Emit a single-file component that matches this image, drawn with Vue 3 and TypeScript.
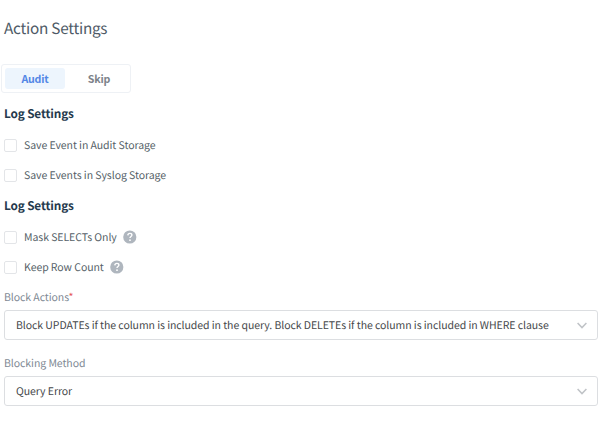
<script setup lang="ts">
import { reactive, ref } from 'vue'

interface CheckItem {
  id: string
  label: string
  help: boolean
}

interface SelectField {
  id: string
  label: string
  required: boolean
  value: string
}

const tabs: string[] = ['Audit', 'Skip']
const activeTab = ref<string>('Audit')

const groups: { id: string; title: string; items: CheckItem[] }[] = [
  {
    id: 'storage',
    title: 'Log Settings',
    items: [
      { id: 'audit', label: 'Save Event in Audit Storage', help: false },
      { id: 'syslog', label: 'Save Events in Syslog Storage', help: false },
    ],
  },
  {
    id: 'rows',
    title: 'Log Settings',
    items: [
      { id: 'mask', label: 'Mask SELECTs Only', help: true },
      { id: 'count', label: 'Keep Row Count', help: true },
    ],
  },
]

const checked = reactive<Record<string, boolean>>({})

const fields: SelectField[] = [
  {
    id: 'actions',
    label: 'Block Actions',
    required: true,
    value: 'Block UPDATEs if the column is included in the query. Block DELETEs if the column is included in WHERE clause',
  },
  { id: 'method', label: 'Blocking Method', required: false, value: 'Query Error' },
]
</script>

<template>
  <main class="settings">
    <h1 class="title"><span>Action Settings</span></h1>

    <div class="tabs" role="tablist">
      <button
        v-for="tab in tabs"
        :key="tab"
        type="button"
        role="tab"
        class="tab"
        :class="{ active: tab === activeTab }"
        @click="activeTab = tab"
      >
        {{ tab }}
      </button>
    </div>

    <section v-for="group in groups" :key="group.id" class="group">
      <h2 class="heading"><span>{{ group.title }}</span></h2>
      <div v-for="item in group.items" :key="item.id" class="row">
        <label class="check">
          <input v-model="checked[item.id]" type="checkbox" class="box" />
          <span class="check-text">{{ item.label }}</span>
        </label>
        <svg v-if="item.help" class="help" viewBox="0 0 14 14">
          <circle cx="6.8" cy="7" r="6.6" fill="#afb6be" />
          <path
            d="M4.8 5.4C4.9 4.1 5.7 3.4 6.9 3.4c1.2 0 2 .7 2 1.7 0 1.4-1.9 1.5-1.9 3"
            fill="none"
            stroke="#fff"
            stroke-width="1.4"
          />
          <circle cx="7" cy="10.2" r="0.9" fill="#fff" />
        </svg>
      </div>
    </section>

    <div v-for="field in fields" :key="field.id" class="field">
      <div class="label">{{ field.label }}<span v-if="field.required" class="star">*</span></div>
      <div class="select" role="combobox">
        <span class="value">{{ field.value }}</span>
        <svg class="chevron" viewBox="0 0 10 7">
          <path d="M0.6 1 5 5.6 9.4 1" fill="none" stroke="#c0c3c7" stroke-width="1.5" />
        </svg>
      </div>
    </div>
  </main>
</template>

<style>
body {
  background: #fff;
}
</style>

<style scoped>
.settings {
  box-sizing: border-box;
  width: 602px;
  height: 436px;
  padding: 13px 4px 0 4px;
  overflow: hidden;
  font-family: 'Noto Sans CJK SC', 'Open Sans', sans-serif;
  font-size: 10.5px;
  letter-spacing: -0.065px;
  text-rendering: geometricPrecision;
  color: #565f68;
  white-space: nowrap;
}

.title {
  display: flex;
  align-items: center;
  height: 30px;
  margin: 0 0 21px;
  font-size: 15.3px;
  font-weight: 400;
  letter-spacing: -0.24px;
  line-height: 30px;
  color: #4e5a66;
}

.tabs {
  display: flex;
  box-sizing: border-box;
  width: 130px;
  height: 29px;
  margin-left: -3px;
  padding: 3px;
  border: 1px solid #eef1f5;
  border-radius: 3px;
}

.tab {
  flex: 0 0 60px;
  height: 21px;
  padding: 0;
  border: 0;
  border-radius: 3px;
  background: transparent;
  font-family: inherit;
  font-size: 10.6px;
  font-weight: 600;
  letter-spacing: -0.2px;
  line-height: 21px;
  color: #7c8289;
}

.tab + .tab {
  flex-basis: 68px;
}

.tab.active {
  background: #edf5fd;
  color: #5387e6;
}

.heading {
  display: flex;
  align-items: center;
  height: 32px;
  margin: 0;
  font-size: 11.8px;
  font-weight: 600;
  letter-spacing: -0.15px;
  line-height: 20px;
  color: #24394d;
}

.tabs + .group {
  margin-top: 4px;
}

.tabs + .group .heading {
  height: 33px;
}

.row {
  display: flex;
  align-items: center;
  gap: 6px;
  height: 30px;
}

.check {
  display: flex;
  align-items: center;
  gap: 7px;
  line-height: 20px;
}

.check-text,
.value {
  padding-top: 2px;
}

.box {
  appearance: none;
  box-sizing: border-box;
  width: 13px;
  height: 13px;
  margin: 0;
  border: 1px solid #e3e5e8;
  border-radius: 2px;
  background: #fff;
}

.help {
  width: 14px;
  height: 14px;
}

.field {
  height: 66px;
}

.label {
  box-sizing: border-box;
  height: 28px;
  padding-top: 2px;
  line-height: 27px;
  color: #808994;
}

.star {
  color: #e45757;
}

.select {
  display: flex;
  box-sizing: border-box;
  align-items: center;
  justify-content: space-between;
  height: 30px;
  padding: 0 10px 0 11px;
  border: 1px solid #dcdee1;
  border-radius: 3px;
  line-height: 20px;
  color: #45474a;
}

.chevron {
  flex: none;
  width: 10px;
  height: 7px;
}
</style>
